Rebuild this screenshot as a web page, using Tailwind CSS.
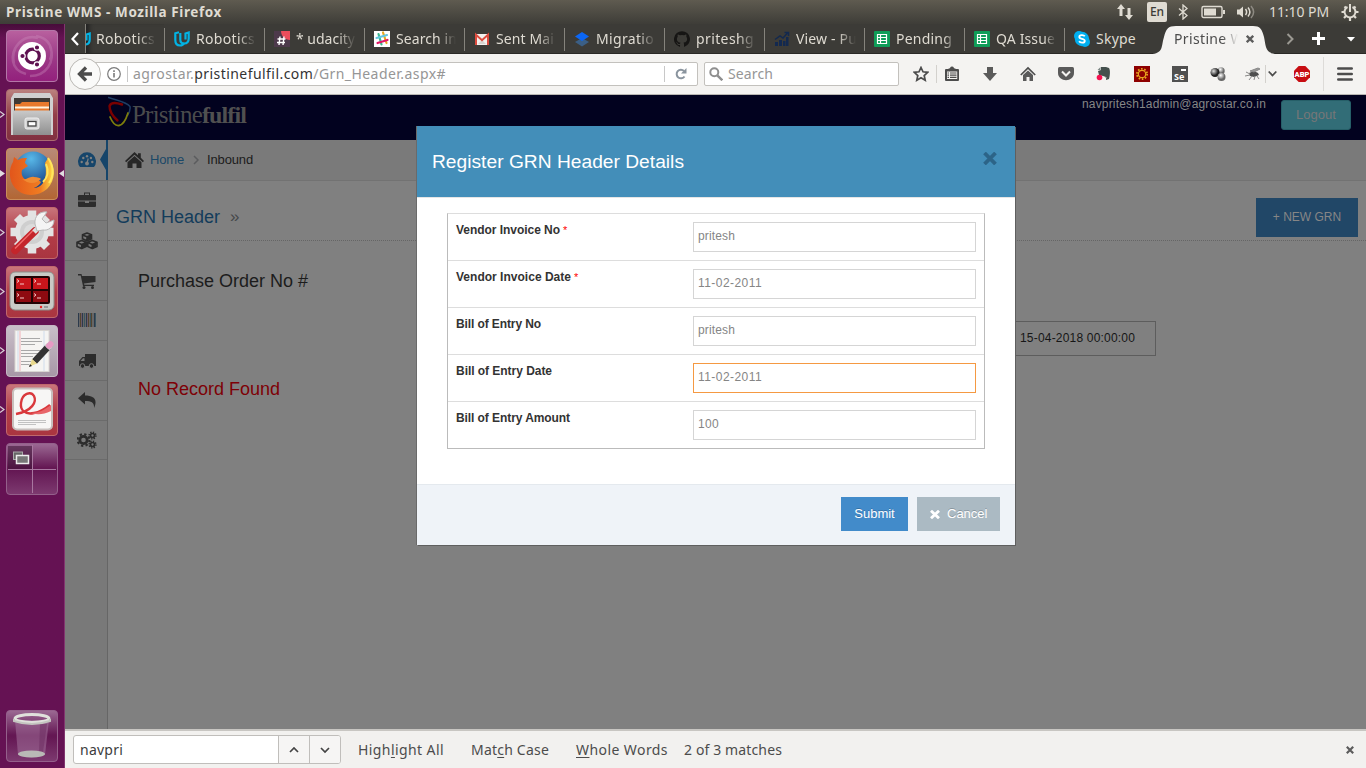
<!DOCTYPE html>
<html lang="en">
<head>
<meta charset="utf-8">
<title>Pristine WMS</title>
<script src="https://cdn.jsdelivr.net/npm/@tailwindcss/browser@4"></script>
</head>
<body class="w-[1366px] h-[768px] overflow-hidden flex flex-col font-['Noto_Sans',sans-serif] text-[14px] leading-5 text-[#4c4c4c] bg-[#808080]">
<svg class="hidden">
  <defs>
    <g id="udacity" fill="none" stroke="#02b3e4" stroke-width="2.200"><path d="M5 1.300L1.300 2.300V9c0 3.500 2 5.500 4.700 5.500 2 0 3.500-1 4.200-2.500"/><path d="M6.300 2v6.500c0 2.500 1.500 4 3.700 4 2.700 0 4.700-1.800 4.700-5V1.500l-3.200 1v6"/></g>
    <g id="sheet"><rect width="16" height="16" rx="1" fill="#0f9d58"/><path d="M3.500 3.500h9v9h-9zM3.500 6.500h9M3.500 9.500h9M6.500 3.500v9" fill="none" stroke="#fff" stroke-width="1.200"/></g>
  </defs>
</svg>

<!-- top panel -->
<header class="h-6 shrink-0 flex items-center pl-1.5 bg-linear-to-b from-[#5f5b50] to-[#3e3d38] text-[#dfdbd2]">
  <span class="font-bold text-[13.500px] whitespace-nowrap" data-w="216">Pristine WMS - Mozilla Firefox</span>
  <div class="ml-auto flex items-center h-6">
    <svg class="w-[18px] h-4 mr-[13px]" viewBox="0 0 18 16" fill="#dfdbd2"><path d="M5 0l4 5H6.500v7h-3V5H1zM13 16l-4-5h2.500V4h3v7H17z"/></svg>
    <span class="w-5 h-5 rounded-[2px] bg-[#dfdbd2] text-[#3c3b37] text-[12px] leading-5 text-center font-medium">En</span>
    <svg class="w-3 h-4 ml-[10px] mr-[12px]" viewBox="0 0 12 16" fill="none" stroke="#dfdbd2" stroke-width="1.300"><path d="M2 4.500l8 7L6 15V1l4 3.500-8 7"/></svg>
    <svg class="w-[24px] h-4" viewBox="0 0 24 16"><rect x="1" y="2.500" width="20" height="11" rx="1.500" fill="none" stroke="#dfdbd2" stroke-width="1.400"/><path d="M3 4.500h12v7H3zM22 6h2v4h-2z" fill="#dfdbd2"/></svg>
    <svg class="w-5 h-4 ml-[11px] mr-[13px]" viewBox="0 0 20 16"><path d="M1 5.500h2.500L7 2.500v11L3.500 10.500H1z" fill="#dfdbd2"/><path d="M9.500 5c1.500 2 1.500 4 0 6M12 3.500c2.500 3 2.500 6 0 9" fill="none" stroke="#dfdbd2" stroke-width="1.500"/><path d="M15 2c3.500 4 3.500 8 0 12" fill="none" stroke="#8d8a82" stroke-width="1.500"/></svg>
    <span class="text-[14px] whitespace-nowrap" data-w="60">11:10 PM</span>
    <svg class="w-[18px] h-[18px] ml-3 mr-[7px]" viewBox="0 0 18 18" fill="none" stroke="#dfdbd2"><path d="M6.500 4a5.500 5.500 0 1 0 5 0" stroke-width="2"/><path d="M9 1v8" stroke-width="2"/><path d="M3.500 3.500l2 2M14.500 3.500l-2 2M0.500 9h3M14.500 9h3M3 15l2-2M15 15l-2-2M9 15v3" stroke-width="2.200"/></svg>
  </div>
</header>

<div class="flex-1 flex min-h-0">
<!-- launcher -->
<nav class="w-[65px] shrink-0 bg-[#651253] border-r border-[#82356f] pt-1.5 pb-1.5 pl-1.5 flex flex-col gap-[7px] bg-linear-to-b from-[#470c3a] to-[#651253] to-[14px] relative">
  <svg class="w-[52px] h-[52px] shrink-0" viewBox="0 0 52 52"><defs><linearGradient id="ub" x1="0" y1="0" x2="0" y2="1"><stop offset="0" stop-color="#b9619f"/><stop offset=".5" stop-color="#9d3b88"/><stop offset="1" stop-color="#93207c"/></linearGradient></defs><rect x=".5" y=".5" width="51" height="51" rx="3.500" fill="url(#ub)" stroke="#b476a8"/><path d="M8 34C4 16 18 4 32 8M44 16c6 16-4 30-20 30M20 44C4 40 4 24 12 14M30 6c14 2 18 14 14 24" fill="none" stroke="#cf93c0" stroke-opacity=".35" stroke-width="2.500"/><circle cx="26" cy="26" r="14" fill="#fff"/><circle cx="26.500" cy="26" r="6.800" fill="none" stroke="#5e1150" stroke-width="3.200"/><g fill="#5e1150" stroke="#fff" stroke-width="1.200"><circle cx="16.500" cy="26" r="2.700"/><circle cx="31" cy="17.500" r="2.700"/><circle cx="31" cy="34.500" r="2.700"/></g></svg>

  <svg class="w-[52px] h-[52px] shrink-0" viewBox="0 0 52 52"><defs><linearGradient id="fg" x1="0" y1="0" x2="0" y2="1"><stop offset="0" stop-color="#bb8380"/><stop offset=".5" stop-color="#933e48"/><stop offset="1" stop-color="#803040"/></linearGradient><linearGradient id="gr" x1="0" y1="0" x2="0" y2="1"><stop offset="0" stop-color="#c9c9c9"/><stop offset="1" stop-color="#8f8f8f"/></linearGradient></defs><rect x=".5" y=".5" width="51" height="51" rx="3.500" fill="url(#fg)" stroke="#ab6b70"/><path d="M8 4h36l3 5v37H5V9z" fill="#d0d0d0"/><path d="M8 9h36v14H8z" fill="#3f3a35"/><path d="M9 15h5l2-2h27v10H9z" fill="#e8792c"/><path d="M9 17.500h34v2H9z" fill="#fff3dd"/><path d="M7 21.500h38V46H7z" fill="url(#gr)"/><rect x="19" y="29" width="14" height="11" rx="2" fill="#d5d5d5" stroke="#eee"/><rect x="22" y="32.500" width="8" height="4.500" fill="#fff" stroke="#444" stroke-width="1.300"/></svg>

  <svg class="w-[52px] h-[52px] shrink-0" viewBox="0 0 52 52"><defs><linearGradient id="ff" x1="0" y1="0" x2="0" y2="1"><stop offset="0" stop-color="#b88a78"/><stop offset="1" stop-color="#b26634"/></linearGradient><radialGradient id="gl" cx=".45" cy=".2" r=".8"><stop offset="0" stop-color="#58b8e8"/><stop offset="1" stop-color="#153f86"/></radialGradient><linearGradient id="fo" x1="0" y1="0" x2="1" y2="0"><stop offset="0" stop-color="#e2561b"/><stop offset=".7" stop-color="#f07d22"/><stop offset="1" stop-color="#ffe24a"/></linearGradient></defs><rect x=".5" y=".5" width="51" height="51" rx="3.500" fill="url(#ff)" stroke="#c98d5a"/><circle cx="27" cy="22" r="18.500" fill="url(#gl)"/><path d="M42 10c8 8 8 22-1 31-9 8-24 8-32-1C2 32 3 20 7 14l1-5 4 3c3-2 6-2 9-2-1 2-2 3-2 5l3 3-6 4c-2 7 4 12 11 11 3-2 6-1 8 1-3 6-11 8-14 5 12 4 22-3 18-24z" fill="url(#fo)"/><path d="M42 10c6 8 6 18 1 25M40 16c3 7 2 13-3 18" fill="none" stroke="#ffe65c" stroke-width="2"/><path d="M16 31c4 2 7-3 12-2 4 0 6 1 7 2-4 4-9 5-14 3z" fill="#f08a32"/></svg>

  <svg class="w-[52px] h-[52px] shrink-0" viewBox="0 0 52 52"><defs><linearGradient id="rd" x1="0" y1="0" x2="0" y2="1"><stop offset="0" stop-color="#c9767c"/><stop offset=".5" stop-color="#b33d48"/><stop offset="1" stop-color="#a93540"/></linearGradient></defs><rect x=".5" y=".5" width="51" height="51" rx="3.500" fill="url(#rd)" stroke="#c0686c"/><g transform="translate(26 25)"><circle r="17" fill="#e3e3e3"/><path d="M0-21.500v43M-21.500 0h43M-15-15l30 30M15-15l-30 30" stroke="#e3e3e3" stroke-width="8.500"/><circle r="12" fill="#cfcfcf"/><circle r="8" fill="#dcdcdc"/></g><path d="M9 43.500L29 24" stroke="#c4252b" stroke-width="7.500" stroke-linecap="round"/><path d="M9 41.500L27 23.500" stroke="#ef6a6a" stroke-width="1.500"/><path d="M28 25l5-5" stroke="#ddd" stroke-width="5"/><path d="M29 17c-1-8 5-13 12-12l-5 7 4 4 8-3c0 7-6 11-11 10l-6 1z" fill="#f4f4f4" stroke="#b9b9b9"/></svg>

  <svg class="w-[52px] h-[52px] shrink-0" viewBox="0 0 52 52"><rect x=".5" y=".5" width="51" height="51" rx="3.500" fill="url(#rd)" stroke="#c0686c"/><rect x="4" y="6" width="44" height="38" rx="5" fill="#c9cac6" stroke="#8c8d88"/><rect x="8" y="10" width="36" height="28" rx="2" fill="#210304"/><path d="M10 12h15v11H10zM27 12h15v11H27z" fill="#c9151b"/><path d="M10 25h15v11H10zM27 25h15v11H27z" fill="#8e0a10"/><path d="M11 13.500l2 1.500-2 1.500m3 1.500h4M28 13.500l2 1.500-2 1.500m3 1.500h4M11 27.500l2 1.500-2 1.500m3 1.500h4M28 27.500l2 1.500-2 1.500m3 1.500h4" stroke="#f3c9c9" fill="none"/><circle cx="35" cy="41" r="1.200" fill="#e22"/><path d="M38 41h4" stroke="#999" stroke-width="2"/></svg>

  <svg class="w-[52px] h-[52px] shrink-0" viewBox="0 0 52 52"><defs><linearGradient id="gy" x1="0" y1="0" x2="0" y2="1"><stop offset="0" stop-color="#c9bfc9"/><stop offset="1" stop-color="#a797a6"/></linearGradient></defs><rect x=".5" y=".5" width="51" height="51" rx="3.500" fill="url(#gy)" stroke="#c5b8c4"/><rect x="9" y="5.500" width="34" height="41" fill="#f5f4f2" stroke="#d9d6d2"/><path d="M14 6v40" stroke="#f1b2b8"/><path d="M12 6v40M38 6v40" stroke="#cfdcec"/><path d="M15 13.500h19M15 16.500h21M15 19.500h14M15 25.500h21M15 28.500h18M15 31.500h12M15 36.500h10M15 39.500h8" stroke="#a8a8a8"/><path d="M28.500 36.500L42 22" stroke="#333" stroke-width="6.500"/><path d="M23.500 41.500l2.500-7.500 5 4.500z" fill="#e9d98c"/><path d="M23 42l3-1-2-2z" fill="#222"/><path d="M41 23l2.500-2.700" stroke="#cfcfcf" stroke-width="6.500"/><path d="M43 20.800l1.500-1.600" stroke="#e79ac4" stroke-width="6" stroke-linecap="round"/></svg>

  <svg class="w-[52px] h-[52px] shrink-0" viewBox="0 0 52 52"><rect x=".5" y=".5" width="51" height="51" rx="3.500" fill="url(#rd)" stroke="#c0686c"/><rect x="7" y="4.500" width="39" height="41" rx="4" fill="#f7f6f5" stroke="#c8bfbd" stroke-width="2"/><path d="M10 30C26 27 31 18 28 12c-3-5-12-3-13 7-1 7 4 12 13 10 7-1 11-4 16-8" fill="none" stroke="#d9383c" stroke-width="2.400"/><path d="M25 29c8 0 13-3 20-8v6c-8 4-14 4-20 2z" fill="#e8666a"/><path d="M12 36.500h28M12 38.500h28M12 40.500h18" stroke="#c2c2c2"/></svg>

  <svg class="w-[52px] h-[52px] shrink-0" viewBox="0 0 52 52"><defs><linearGradient id="ws" x1="0" y1="0" x2="0" y2="1"><stop offset="0" stop-color="#9c6a94"/><stop offset=".48" stop-color="#641753"/><stop offset=".52" stop-color="#641753"/><stop offset="1" stop-color="#7d3a70"/></linearGradient></defs><rect x=".5" y=".5" width="51" height="51" rx="3.500" fill="url(#ws)" stroke="#94608b"/><path d="M2 3h24v23H2z" fill="#3d1435" fill-opacity=".55"/><path d="M26.500 2v48M2 26.500h48" stroke="#a877a0"/><rect x="7.500" y="9" width="9" height="7.500" fill="#666" stroke="#aaa"/><rect x="10.500" y="12.500" width="12" height="8" fill="#777" stroke="#eee" stroke-width="1.500"/></svg>

  <svg class="w-[52px] h-[52px] shrink-0 mt-auto" viewBox="0 0 52 52"><rect x=".5" y=".5" width="51" height="51" rx="3.500" fill="url(#ws)" stroke="#94608b"/><path d="M9 10h34l-4 35q-13 5-27 0z" fill="#a678a0" fill-opacity=".5"/><path d="M34 14h7l-4 28h-4z" fill="#6b2c60" fill-opacity=".5"/><ellipse cx="25.500" cy="44" rx="13.500" ry="3.500" fill="#b9bab6"/><ellipse cx="26" cy="8.500" rx="17" ry="4" fill="none" stroke="#e0e1dc" stroke-width="3"/><path d="M8 9v2q18 6 36 0V9" fill="none" stroke="#c4c5c0" stroke-width="2"/></svg>

  <svg class="absolute left-0 top-0 w-[65px] h-[450px]" viewBox="0 0 65 450" fill="none" stroke="#d8d0d6" stroke-width="1.200"><path d="M0 87.500l4 3-4 3M0 205.500l4 3-4 3M0 264.500l4 3-4 3M0 323.500l4 3-4 3M0 382.500l4 3-4 3"/><path d="M0 146l5 3.500-5 3.500zM64 146l-5 3.500 5 3.500z" fill="#e0dce0" stroke="none"/></svg>
</nav>

<main class="flex-1 min-w-0 flex flex-col">
<!-- tab strip -->
<div class="h-[30px] shrink-0 bg-[#3c3b37] border-b border-[#2a2926] flex text-[#dfdbd2] text-[14px] leading-[30px]">
  <div class="w-5 flex items-center justify-center"><svg class="w-2.5 h-3.5" viewBox="0 0 10 14" fill="none" stroke="#fff" stroke-width="2.200"><path d="M8 1L2.500 7 8 13"/></svg></div>
  <div class="w-[79px] border-l border-[#85837c] flex relative overflow-hidden shadow-[inset_6px_0_5px_-3px_#222]">
    <svg class="w-4 h-4 mt-2 -ml-[11px] shrink-0" viewBox="0 0 16 16"><use href="#udacity"/></svg>
    <span class="ml-[5px] w-[60px] overflow-hidden mask-r-from-70%"><span class="whitespace-nowrap" data-w="59">Robotics</span></span>
  </div>
  <div class="w-[100px] shrink-0 flex items-center relative before:absolute before:left-0 before:top-1 before:h-[23px] before:w-px before:bg-[#85837c]"><svg class="w-4 h-4 ml-2.5 shrink-0" viewBox="0 0 16 16"><use href="#udacity"/></svg><span class="ml-1.5 w-[60px] overflow-hidden mask-r-from-70%"><span class="whitespace-nowrap" data-w="59">Robotics</span></span></div>
  <div class="w-[100px] shrink-0 flex items-center relative before:absolute before:left-0 before:top-1 before:h-[23px] before:w-px before:bg-[#85837c]"><svg class="w-4 h-4 ml-2.5 shrink-0" viewBox="0 0 16 16"><path fill="#4d394b" d="M0 0h16v16H0z"/><path d="M7 0h9v9C11 9 7 5 7 0z" fill="#eb4d5c"/><path d="M6 5.500L5 14M10 5.500L9 14M3.500 8h8M3 11.500h8" stroke="#fff" stroke-width="1.400"/></svg><span class="ml-1.5 w-[60px] overflow-hidden mask-r-from-70%"><span class="whitespace-nowrap" data-w="59">* udacity</span></span></div>
  <div class="w-[100px] shrink-0 flex items-center relative before:absolute before:left-0 before:top-1 before:h-[23px] before:w-px before:bg-[#85837c]"><svg class="w-4 h-4 ml-2.5 shrink-0" viewBox="0 0 16 16"><path fill="#fff" d="M0 0h16v16H0z"/><g fill="none" stroke-width="2.200" stroke-linecap="round"><path d="M4.500 3l3 10.500" stroke="#3eb991"/><path d="M9 1.500L12.500 12" stroke="#e9a820"/><path d="M2.500 7L13 4" stroke="#63c6de"/><path d="M3.500 12l10-3" stroke="#e01765"/></g></svg><span class="ml-1.5 w-[60px] overflow-hidden mask-r-from-70%"><span class="whitespace-nowrap" data-w="61">Search in</span></span></div>
  <div class="w-[100px] shrink-0 flex items-center relative before:absolute before:left-0 before:top-1 before:h-[23px] before:w-px before:bg-[#85837c]"><svg class="w-4 h-4 ml-2.5 shrink-0" viewBox="0 0 16 16"><path fill="#f3f0ee" d="M1 3h14v11H1z"/><path d="M4 13l4-4 4 4z" fill="#d7d3cf"/><path d="M2 14V3.800l6 5.400 6-5.400V14" fill="none" stroke="#dc4b3e" stroke-width="2"/></svg><span class="ml-1.5 w-[60px] overflow-hidden mask-r-from-70%"><span class="whitespace-nowrap" data-w="58">Sent Mai</span></span></div>
  <div class="w-[100px] shrink-0 flex items-center relative before:absolute before:left-0 before:top-1 before:h-[23px] before:w-px before:bg-[#85837c]"><svg class="w-4 h-4 ml-2.5 shrink-0" viewBox="0 0 16 16"><path d="M8 7l7 4-7 4.500L1 11z" fill="#3b5f86"/><path d="M8 1l7 4.500L8 10 1 5.500z" fill="#0b66f5"/></svg><span class="ml-1.5 w-[60px] overflow-hidden mask-r-from-70%"><span class="whitespace-nowrap" data-w="58">Migratio</span></span></div>
  <div class="w-[100px] shrink-0 flex items-center relative before:absolute before:left-0 before:top-1 before:h-[23px] before:w-px before:bg-[#85837c]"><svg class="w-4 h-4 ml-2.5 shrink-0" viewBox="0 0 16 16"><path fill="#161514" d="M8 .2a8 8 0 0 0-2.530 15.590c.4.070.55-.17.550-.38v-1.490c-2.230.48-2.700-.95-2.700-.95-.36-.92-.89-1.170-.89-1.170-.73-.5.050-.49.050-.49.810.06 1.230.83 1.230.83.720 1.230 1.870.87 2.330.67.070-.52.280-.88.510-1.080-1.780-.2-3.640-.89-3.640-3.950 0-.87.310-1.590.820-2.150-.08-.2-.36-1.020.080-2.120 0 0 .670-.21 2.200.82a7.600 7.600 0 0 1 4 0c1.530-1.040 2.200-.82 2.200-.82.440 1.100.160 1.920.080 2.120.510.560.820 1.280.820 2.150 0 3.070-1.870 3.750-3.650 3.950.290.250.540.730.540 1.480v2.190c0 .210.150.460.550.380A8 8 0 0 0 8 .2z"/></svg><span class="ml-1.5 w-[60px] overflow-hidden mask-r-from-70%"><span class="whitespace-nowrap" data-w="58">priteshg</span></span></div>
  <div class="w-[100px] shrink-0 flex items-center relative before:absolute before:left-0 before:top-1 before:h-[23px] before:w-px before:bg-[#85837c]"><svg class="w-4 h-4 ml-2.5 shrink-0" viewBox="0 0 16 16"><path d="M1 11h3v4H1zM5 9h3v6H5zM9 10h2.500v5H9zM12 6h2.500v9H12z" fill="#13294f"/><path d="M1 8.500L6 5l3 2 4.500-5M10.500 1.500h4V5" fill="none" stroke="#13294f" stroke-width="1.500"/></svg><span class="ml-1.5 w-[60px] overflow-hidden mask-r-from-70%"><span class="whitespace-nowrap" data-w="61">View - Pu</span></span></div>
  <div class="w-[100px] shrink-0 flex items-center relative before:absolute before:left-0 before:top-1 before:h-[23px] before:w-px before:bg-[#85837c]"><svg class="w-4 h-4 ml-2.5 shrink-0" viewBox="0 0 16 16"><use href="#sheet"/></svg><span class="ml-1.5 w-[60px] overflow-hidden mask-r-from-80%"><span class="whitespace-nowrap" data-w="56">Pending</span></span></div>
  <div class="w-[100px] shrink-0 flex items-center relative before:absolute before:left-0 before:top-1 before:h-[23px] before:w-px before:bg-[#85837c]"><svg class="w-4 h-4 ml-2.5 shrink-0" viewBox="0 0 16 16"><use href="#sheet"/></svg><span class="ml-1.5 w-[60px] overflow-hidden mask-r-from-80%"><span class="whitespace-nowrap" data-w="59">QA Issue</span></span></div>
  <div class="w-[86px] shrink-0 flex items-center relative before:absolute before:left-0 before:top-1 before:h-[23px] before:w-px before:bg-[#85837c]"><svg class="w-4 h-4 ml-2.5 shrink-0" viewBox="0 0 16 16"><circle cx="5" cy="5" r="5" fill="#00aff0"/><circle cx="11" cy="11" r="5" fill="#00aff0"/><circle cx="8" cy="8" r="7.200" fill="#00aff0"/><path d="M10.800 5.300C9.500 3.600 5.300 3.800 5.300 5.900c0 2.400 5.500 1.500 5.500 4 0 2.200-4.500 2.300-5.700.4" fill="none" stroke="#fff" stroke-width="1.800"/></svg><span class="ml-1.5 whitespace-nowrap" data-w="40">Skype</span></div>
  <div class="w-[130px] shrink-0 h-[30px] relative flex items-center text-[#4c4c4c]">
    <svg class="absolute left-0 top-0 w-[130px] h-[30px]" viewBox="0 0 130 30"><path d="M0 30C14 30 11 22 14 13 16 5 18 2 26 2h77c7 0 9 3 11 11 2 9 1 17 13 17z" fill="#f4f3f1"/></svg>
    <span class="relative ml-6 w-[64px] overflow-hidden mask-r-from-75%"><span class="whitespace-nowrap" data-w="70">Pristine W</span></span>
    <svg class="relative w-2 h-2 ml-[8px]" viewBox="0 0 8 8" stroke="#5c5c5c" stroke-width="2.300"><path d="M.8.8l6.400 6.400M7.200.8L.8 7.200"/></svg>
  </div>
  <div class="flex items-center pl-[6px]">
    <svg class="w-2 h-3" viewBox="0 0 8 12" fill="none" stroke="#9b9992" stroke-width="2"><path d="M1.500 1L6.500 6l-5 5"/></svg>
    <svg class="w-[13px] h-[13px] ml-[18px]" viewBox="0 0 13 13" stroke="#fff" stroke-width="3"><path d="M6.500 0v13M0 6.500h13"/></svg>
    <svg class="w-2 h-[5px] ml-[22px] mt-0.5" viewBox="0 0 8 5" fill="#fff"><path d="M0 0h8L4 4.500z"/></svg>
  </div>
</div>

<!-- navigation bar -->
<div class="h-[41px] shrink-0 bg-[#f4f3f1] border-b border-[#b9b7b3] flex items-center pl-1">
  <div class="w-8 h-8 rounded-full border border-[#bab8b4] bg-[#fafaf9] flex items-center justify-center relative z-10"><svg class="w-4 h-4" viewBox="0 0 16 16" fill="none" stroke="#4c4c4c" stroke-width="3.300"><path d="M9 1.500L2.500 8 9 14.500M3 8h12"/></svg></div>
  <div class="-ml-2 w-[605px] h-6 border border-[#c3c1bd] rounded-[2px] bg-white flex items-center pl-[13px] relative">
    <svg class="h-[14px] w-[14px]" viewBox="0 0 14 14" fill="none" stroke="#7a7a7a"><circle cx="7" cy="7" r="6.300" stroke-width="1.200"/><path d="M7 6v4.500M7 3.300v1.700" stroke-width="1.600"/></svg>
    <span class="w-px h-4 bg-[#c8c8c8] ml-[6px] mr-[5px]"></span>
    <span class="whitespace-nowrap text-[#969696]" data-w="313">agrostar.<span class="text-[#333]">pristinefulfil.com</span>/Grn_Header.aspx#</span>
    <span class="ml-auto w-px h-4 bg-[#c8c8c8]"></span>
    <svg class="w-3 h-3 ml-[10px] mr-[10px]" viewBox="0 0 12 12"><path d="M9.500 8.500A4.300 4.300 0 1 1 9 3" fill="none" stroke="#8a949e" stroke-width="2"/><path d="M11.500 0v5.500H6z" fill="#8a949e"/></svg>
  </div>
  <div class="ml-1.5 w-[195px] h-6 border border-[#c3c1bd] rounded-[2px] bg-white flex items-center pl-1">
    <svg class="w-3.5 h-3.5" viewBox="0 0 14 14" fill="none" stroke="#8f8f8f"><circle cx="5.300" cy="5.300" r="4" stroke-width="2"/><path d="M8.300 8.300l5 5" stroke-width="2.400"/></svg>
    <span class="ml-[5px] whitespace-nowrap text-[#969696]" data-w="45">Search</span>
  </div>
  <svg class="w-4 h-4 ml-[14px]" viewBox="0 0 16 16" fill="none" stroke="#4c4c4c" stroke-width="1.700"><path d="M8 1.500l2 4.300 4.700.5-3.500 3.200 1 4.700L8 11.800l-4.200 2.400 1-4.700L1.300 6.300 6 5.800z"/></svg>
  <span class="w-px h-[18px] bg-[#d3d1cd] ml-[7px] mr-[7px]"></span>
  <svg class="w-4 h-4" viewBox="0 0 16 16"><path d="M5 2.500C6.500 2.500 6 .5 8 .5s1.500 2 3 2L12 3h2q1 0 1 1v10q0 1-1 1H2q-1 0-1-1V4q0-1 1-1h2z" fill="#4c4c4c"/><path d="M3 5.500h10.200V13H3z" fill="#f4f3f1"/><path d="M3.500 7h1.500m1 0h6.500M3.500 9.200h1.500m1 0h6.500M3.500 11.400h1.500m1 0h6.500" stroke="#4c4c4c" stroke-width="1.200"/></svg>
  <div class="ml-[11px] w-[266px] flex">
    <div class="w-[38px] flex justify-center"><svg class="w-4 h-4" viewBox="0 0 16 16" fill="#5a5a5a"><path d="M5 1h6v6h4l-7 8-7-8h4z"/></svg></div>
    <div class="w-[38px] flex justify-center"><svg class="w-4 h-4" viewBox="0 0 16 16"><path d="M.8 9L8 2l7.200 7" fill="none" stroke="#4c4c4c" stroke-width="1.700"/><path d="M3 9l5-4.500L13 9v6H9.500v-4h-3v4H3z" fill="#5a5a5a"/></svg></div>
    <div class="w-[38px] flex justify-center"><svg class="w-4 h-4" viewBox="0 0 16 16"><path d="M1.500 1h13Q16 1 16 2.500V7c0 9.500-16 9.500-16 0V2.500Q0 1 1.500 1z" fill="#5a5a5a"/><path d="M4 5.500l4 4 4-4" fill="none" stroke="#f4f3f1" stroke-width="2"/></svg></div>
    <div class="w-[38px] flex justify-center"><svg class="w-4 h-4" viewBox="0 0 16 16"><path d="M5 1h5l3 1c1.500 2 1 8 0 11l-3 1v-3l-3-1-4-1-1-4 3-1z" fill="#44504d"/><path d="M1.500 4l3-3v3zM9 11h2v2" fill="#7b8683"/><circle cx="3.500" cy="11.500" r="2.800" fill="#f5114f"/></svg></div>
    <div class="w-[38px] flex justify-center"><svg class="w-4 h-4" viewBox="0 0 16 16"><path fill="#8e0000" d="M0 0h16v16H0z"/><g fill="none" stroke="#e8a41e"><circle cx="8" cy="8" r="3.700" stroke-width="1.200"/><circle cx="8" cy="8" r="5.100" stroke-width="1.800" stroke-dasharray="1.600 1.604"/></g></svg></div>
    <div class="w-[38px] flex justify-center"><span class="w-4 h-4 bg-[#505050] text-white text-[9px] leading-[9px] font-bold pt-[6px] pl-[2px] relative after:absolute after:right-0.5 after:top-[3px] after:w-[5px] after:h-[2px] after:bg-white">Se</span></div>
    <div class="w-[38px] flex justify-center"><svg class="w-4 h-4" viewBox="0 0 16 16"><defs><radialGradient id="b1" cx=".35" cy=".35"><stop offset="0" stop-color="#ddd"/><stop offset="1" stop-color="#222"/></radialGradient><radialGradient id="b2" cx=".4" cy=".3"><stop offset="0" stop-color="#fff"/><stop offset="1" stop-color="#666"/></radialGradient></defs><circle cx="11" cy="5" r="3.700" fill="url(#b2)"/><circle cx="5" cy="6.500" r="4.500" fill="url(#b1)"/><circle cx="11.500" cy="11" r="4" fill="url(#b2)"/></svg></div>
  </div>
  <svg class="w-4 h-4 ml-2" viewBox="0 0 16 16"><path d="M4 7l5-2 4 2 1 2-5 2-4-1z" fill="#4e4e4e"/><path d="M5 5l8-3 2 1-6 3zM1 6l4 2M0 10l5-1M4 14l3-4M9 14l1-4M14 13l-2-3" fill="#999" stroke="#888"/></svg>
  <span class="w-px h-[18px] bg-[#d3d1cd] ml-[4px]"></span>
  <svg class="w-[9px] h-2 ml-[2px]" viewBox="0 0 9 8" fill="none" stroke="#4c4c4c" stroke-width="1.800"><path d="M.7 1.500l3.800 4 3.800-4"/></svg>
  <svg class="w-4 h-4 ml-[17px]" viewBox="0 0 16 16"><path d="M4.700 0h6.600L16 4.700v6.600L11.300 16H4.700L0 11.300V4.700z" fill="#c70d12"/><text x="8" y="10.800" font-family="Roboto" font-weight="900" font-size="7.500" fill="#fff" text-anchor="middle">ABP</text></svg>
  <span class="w-px h-[34px] bg-[#dddbd8] ml-[13px]"></span>
  <svg class="w-4 h-[14px] ml-[13px]" viewBox="0 0 16 14" stroke="#4c4c4c" stroke-width="2.600" stroke-linecap="round"><path d="M1.300 1.500h13.400M1.300 7h13.400M1.300 12.500h13.400"/></svg>
</div>

<!-- web page -->
<div class="flex-1 min-h-0 relative overflow-hidden flex flex-col bg-[#808080] font-['Liberation_Sans',Arial,sans-serif]">
  <div class="h-[45px] shrink-0 bg-[#02021f] flex pl-[43px]">
    <svg class="w-6 h-[34px]" viewBox="0 0 24 34" fill="none" stroke-linecap="round"><path d="M.5 2.500c8 3 17 4 21.500 9 .5 3-.5 6-2.500 9" stroke="#1f3d63" stroke-width="1.500"/><path d="M14 9.500C8 7.500 3 7 1.500 11c0 6 3 10 8 14.500" stroke="#7a0000" stroke-width="2.400"/><path d="M2 22c5 12 13 12 18-4" stroke="#7d7d0c" stroke-width="1.800"/></svg>
    <span class="font-['Liberation_Serif',serif] text-[25px] leading-[40px] text-[#4a4b4c] whitespace-nowrap"><span data-w="70">Pristine</span><span class="font-bold text-[#505050] text-[24px]" data-w="44">fulfil</span></span>
    <span class="ml-auto text-[12px] leading-[18px] text-[#868686]"><span class="whitespace-nowrap" data-w="184">navpritesh1admin@agrostar.co.in</span></span>
    <span class="ml-[15px] mt-[5px] mr-[15px] w-[70px] h-[30px] rounded-[3px] bg-[#326d77] border border-[#265f68] text-[13px] leading-[28px] text-center text-[#777]">Logout</span>
  </div>
  <div class="flex-1 flex min-h-0">
    <div class="w-[43px] shrink-0 bg-[#797979] border-r border-[#666] relative">
      <div class="h-10 bg-[#7f7f7f] flex items-center justify-center pl-0.5 relative"><svg class="w-[18px] h-[18px]" viewBox="0 0 18 18"><path d="M2 16a9 9 0 1 1 14 0z" fill="#16456a"/><g fill="#808080"><circle cx="3.700" cy="11" r="1.200"/><circle cx="5.300" cy="7" r="1.200"/><circle cx="9" cy="5.200" r="1.200"/><circle cx="12.900" cy="7" r="1.200"/><circle cx="14.300" cy="11" r="1.200"/><circle cx="9" cy="12.500" r="1.900"/></g><path d="M9 12.500l1.200-5" stroke="#808080" stroke-width="1.200"/></svg>
        <svg class="absolute -right-px top-0 w-2 h-10" viewBox="0 0 8 40" fill="#16456a"><path d="M6 0h2v40H6V30L0 19.500 6 9z"/></svg></div>
      <div class="h-10 border-t border-[#6b6b6b] flex items-center justify-center pl-0.5 pb-0.5"><svg class="w-[18px] h-[18px]" viewBox="0 0 18 18" fill="#2c2c2c"><path d="M6 4V1.500h6V4M0 5q0-1 1-1h16q1 0 1 1v4.500H0z"/><path d="M7 2.500h4V4H7z" fill="#797979"/><path d="M0 10.500h7v1.500h4v-1.500h7V15q0 1-1 1H1q-1 0-1-1z"/></svg></div>
      <div class="h-10 border-t border-[#6b6b6b] flex items-center justify-center pl-0.5"><svg class="w-[22px] h-[18px]" viewBox="0 0 22 18" fill="none" stroke="#2c2c2c" stroke-width="1.600" stroke-linejoin="round"><path d="M11 1l4.500 1.800v4L11 8.800 6.500 6.800v-4zM6.500 3L11 4.800 15.500 3M11 5v3.500M5.700 8.500l4.500 1.800v4.200l-4.500 2-4.700-2v-4.200zM1 10.500l4.700 2 4.500-2M5.700 12.500v4M16.300 8.500l4.700 1.800v4.200l-4.700 2-4.500-2v-4.200zM12 10.500l4.300 2 4.700-2M16.300 12.500v4"/><path d="M6 12.500l4-2v4l-4 2zM16.500 12.500l4-2v4l-4 2zM11 5l4-2v3.600l-4 2z" fill="#2c2c2c" stroke="none"/></svg></div>
      <div class="h-10 border-t border-[#6b6b6b] flex items-center justify-center pl-0.5"><svg class="w-[18px] h-[16px]" viewBox="0 0 18 16" fill="#2c2c2c"><path d="M0 1h3.500L4 3h13.500v6L6 10.500l.3 1.300H16V13H5L2.700 2.500H0z"/><circle cx="6" cy="14.500" r="1.500"/><circle cx="14.500" cy="14.500" r="1.500"/></svg></div>
      <div class="h-10 border-t border-[#6b6b6b] flex items-center justify-center pl-0.5 pb-px"><svg class="w-[18px] h-[14px]" viewBox="0 0 18 14"><path d="M0 0h18v14H0z" fill="#666"/><path d="M.5 0v14M4.500 0v14M8.500 0v14M16.500 0v14" stroke="#2c3a4c"/><path d="M2.500 0v14M10.500 0v14M13.500 0v14" stroke="#54452f"/><path d="M6.500 0v14M12.500 0v14M17.500 0v14" stroke="#3a5560"/><path d="M9.500 0v14M3.500 0v14" stroke="#6a5a68"/></svg></div>
      <div class="h-10 border-t border-[#6b6b6b] flex items-center justify-center pl-0.5"><svg class="w-[18px] h-[16px]" viewBox="0 0 18 16" fill="#2c2c2c"><path d="M18 1v12H1V8l3.500-4H7V1z"/><path d="M2.500 8l2.500-2.800h1.500V8z" fill="#797979"/><circle cx="4.500" cy="13" r="2.300" stroke="#797979"/><circle cx="13.500" cy="13" r="2.300" stroke="#797979"/></svg></div>
      <div class="h-10 border-t border-[#6b6b6b] flex items-center justify-center pl-0.5 pb-px"><svg class="w-[18px] h-[16px]" viewBox="0 0 18 16" fill="#2c2c2c"><path d="M7 0v3.500c9 0 13 4 9 12.500.5-5-2-7-9-7v3.500L0 6.300z"/></svg></div>
      <div class="h-10 border-y border-[#6b6b6b] flex items-center justify-center pl-0.5"><svg class="w-5 h-[18px]" viewBox="0 0 20 18" fill="none" stroke="#2c2c2c"><circle cx="6.500" cy="9" r="3.700" stroke-width="2.800"/><circle cx="6.500" cy="9" r="5.900" stroke-width="2" stroke-dasharray="2.300 2.334"/><circle cx="15.500" cy="4.500" r="2" stroke-width="1.700"/><circle cx="15.500" cy="4.500" r="3.400" stroke-width="1.500" stroke-dasharray="1.300 1.370"/><circle cx="15.500" cy="13.500" r="2" stroke-width="1.700"/><circle cx="15.500" cy="13.500" r="3.400" stroke-width="1.500" stroke-dasharray="1.300 1.370"/></svg></div>
    </div>
    <div class="flex-1 min-w-0 flex flex-col text-[#1c1c1c]">
      <div class="h-[41px] shrink-0 bg-[#7a7a7a] border-b border-[#727272] flex items-center pl-[17px] text-[13px]">
        <svg class="w-[19px] h-4" viewBox="0 0 19 16" fill="#272727"><path d="M9.500 0l3.500 3.300V1.200h2.800v4.600L19 9l-1.200 1.300L9.500 2.700 1.200 10.300 0 9z"/><path d="M9.500 4l7 6.300V16h-5v-4.500h-4V16h-5v-5.700z"/></svg>
        <span class="ml-1.5 text-[#1b4867]"><span data-w="34">Home</span></span>
        <svg class="w-1.5 h-2.5 ml-[9px] mr-[8px]" viewBox="0 0 6 10" fill="none" stroke="#5b5c5e" stroke-width="1.500"><path d="M1 1l4 4-4 4"/></svg>
        <span data-w="46">Inbound</span>
      </div>
      <div class="h-[60px] shrink-0 border-b border-dotted border-[#656565] flex pl-2 pr-2 items-center">
        <span class="text-[18px] text-[#133c5b] mt-[13px]">GRN Header</span>
        <span class="text-[17px] text-[#46484b] ml-2.5 mt-[13px]">»</span>
        <span class="ml-auto mt-3.5 w-[102px] h-[39px] bg-[#214767] text-[12px] leading-[39px] text-center text-[#868686]">+ NEW GRN</span>
      </div>
      <div class="pl-[30px] text-[18px]">
        <p class="mt-[30px] leading-5">Purchase Order No #</p>
        <div class="mt-[30px] ml-[400px] w-[618px] h-[35px] border border-[#5d5d5d] text-[12px] leading-[33px] pr-5 text-right text-[#161616]"><span class="inline-block whitespace-nowrap" data-w="115">15-04-2018 00:00:00</span></div>
        <p class="mt-[23px] leading-5 text-[#7e0006]">No Record Found</p>
      </div>
    </div>
  </div>

  <!-- dialog -->
  <section class="absolute left-[352px] top-[31px] w-[598px] h-[419px] flex flex-col bg-white shadow-[1px_1px_0_0_#5f5f5f,-1px_0_0_0_#6a6a6a]">
    <div class="h-[71px] shrink-0 bg-[#438eb9] flex items-center px-[15px] text-white text-[19.200px]">
      <span class="whitespace-nowrap" data-w="252">Register GRN Header Details</span>
      <svg class="w-[14px] h-[13px] ml-auto mr-[3px] -mt-1.5" viewBox="0 0 14 13" fill="none" stroke="#2c6488" stroke-width="3.800"><path d="M1.500 1l11 11M12.500 1l-11 11"/></svg>
    </div>
    <div class="h-[287px] shrink-0 border-t border-[#e5e5e5] pt-[15px] px-[30px] text-[12px]">
      <div class="border border-[#bbb] border-t-[#ddd] h-[236px] flex flex-col divide-y divide-[#ddd] leading-[14px] text-[#333]">
        <div class="h-[47px] flex pl-2 pr-2 pt-2"><span class="w-[237px] pt-[1px] font-bold"><span class="whitespace-nowrap" data-w="104">Vendor Invoice No</span><span class="ml-[3px] font-normal text-[11px] text-[#f00]">*</span></span><span class="w-[283px] h-[30px] border border-[#d5d5d5] pl-1 pt-[6px] text-[#858585]"><span data-w="37">pritesh</span></span></div>
        <div class="h-[47px] flex pl-2 pr-2 pt-2"><span class="w-[237px] pt-[1px] font-bold"><span class="whitespace-nowrap" data-w="115">Vendor Invoice Date</span><span class="ml-[3px] font-normal text-[11px] text-[#f00]">*</span></span><span class="w-[283px] h-[30px] border border-[#d5d5d5] pl-1 pt-[6px] text-[#858585]"><span data-w="64">11-02-2011</span></span></div>
        <div class="h-[47px] flex pl-2 pr-2 pt-2"><span class="w-[237px] pt-[1px] font-bold"><span class="whitespace-nowrap" data-w="85">Bill of Entry No</span></span><span class="w-[283px] h-[30px] border border-[#d5d5d5] pl-1 pt-[6px] text-[#858585]"><span data-w="37">pritesh</span></span></div>
        <div class="h-[47px] flex pl-2 pr-2 pt-2"><span class="w-[237px] pt-[1px] font-bold"><span class="whitespace-nowrap" data-w="96">Bill of Entry Date</span></span><span class="w-[283px] h-[30px] border border-[#f59942] pl-1 pt-[6px] text-[#858585]"><span data-w="64">11-02-2011</span></span></div>
        <div class="h-[46px] flex pl-2 pr-2 pt-2"><span class="w-[237px] pt-[1px] font-bold"><span class="whitespace-nowrap" data-w="114">Bill of Entry Amount</span></span><span class="w-[283px] h-[30px] border border-[#d5d5d5] pl-1 pt-[6px] text-[#858585]"><span data-w="21">100</span></span></div>
      </div>
    </div>
    <div class="flex-1 bg-[#eff3f8] border-t border-[#e4e9ee] flex justify-end gap-[9px] pr-[15px] pt-3 text-[13px] leading-[34px] text-white [text-shadow:0_-1px_0_rgba(0,0,0,.2)]">
      <span class="w-[67px] h-[34px] bg-[#428bca] text-center">Submit</span>
      <span class="w-[83px] h-[34px] bg-[#abbac3] flex items-center pl-[13px]"><svg class="w-[10px] h-[9px] mr-[7px]" viewBox="0 0 10 9" stroke="#fff" stroke-width="2.900"><path d="M1 .8l8 7.400M9 .8L1 8.200"/></svg>Cancel</span>
    </div>
  </section>
</div>

<!-- find bar -->
<div class="h-[39px] shrink-0 bg-[#f2f1ef] border-t-2 border-[#c8c6c2] flex items-center pl-2">
  <div class="w-[268px] h-[29px] rounded-[3px] border border-[#c0bebb] bg-white flex overflow-hidden text-[#3c3c3c]">
    <span class="w-[204px] pl-1.5 leading-[27px]"><span data-w="43">navpri</span></span>
    <span class="w-[31px] border-l border-[#c0bebb] bg-[#f6f5f4] flex items-center justify-center"><svg class="w-2.5 h-2" viewBox="0 0 10 8" fill="none" stroke="#444" stroke-width="1.700"><path d="M1 6l4-4 4 4"/></svg></span>
    <span class="w-[31px] border-l border-[#c0bebb] bg-[#f6f5f4] flex items-center justify-center"><svg class="w-2.5 h-2" viewBox="0 0 10 8" fill="none" stroke="#444" stroke-width="1.700"><path d="M1 2l4 4 4-4"/></svg></span>
  </div>
  <div class="w-[113px] pl-[17px]"><span class="whitespace-nowrap" data-w="86">High<u class="underline-offset-2">l</u>ight All</span></div>
  <div class="w-[105px] pl-[17px]"><span class="whitespace-nowrap" data-w="78">Mat<u class="underline-offset-2">c</u>h Case</span></div>
  <div class="w-[108px] pl-[17px]"><span class="whitespace-nowrap" data-w="92"><u class="underline-offset-2">W</u>hole Words</span></div>
  <div class="pl-[17px]"><span class="whitespace-nowrap" data-w="98">2 of 3 matches</span></div>
  <svg class="w-2 h-2 ml-auto mr-3" viewBox="0 0 8 8" stroke="#5c5c5c" stroke-width="2.200"><path d="M.8.8l6.400 6.400M7.200.8L.8 7.200"/></svg>
</div>
</main>
</div>
<script>
// Track each label to its design width, once styles and fonts are in place.
function fitLabels() {
  document.querySelectorAll('[data-w]').forEach(function (el) {
    el.style.letterSpacing = '0px';
    var w = el.getBoundingClientRect().width;
    el.style.letterSpacing = ((el.dataset.w - w) / el.textContent.length).toFixed(3) + 'px';
  });
}
fitLabels();
window.addEventListener('load', fitLabels);
document.fonts.ready.then(fitLabels);
[30, 120, 300].forEach(function (t) { setTimeout(fitLabels, t); });
</script>
</body>
</html>
